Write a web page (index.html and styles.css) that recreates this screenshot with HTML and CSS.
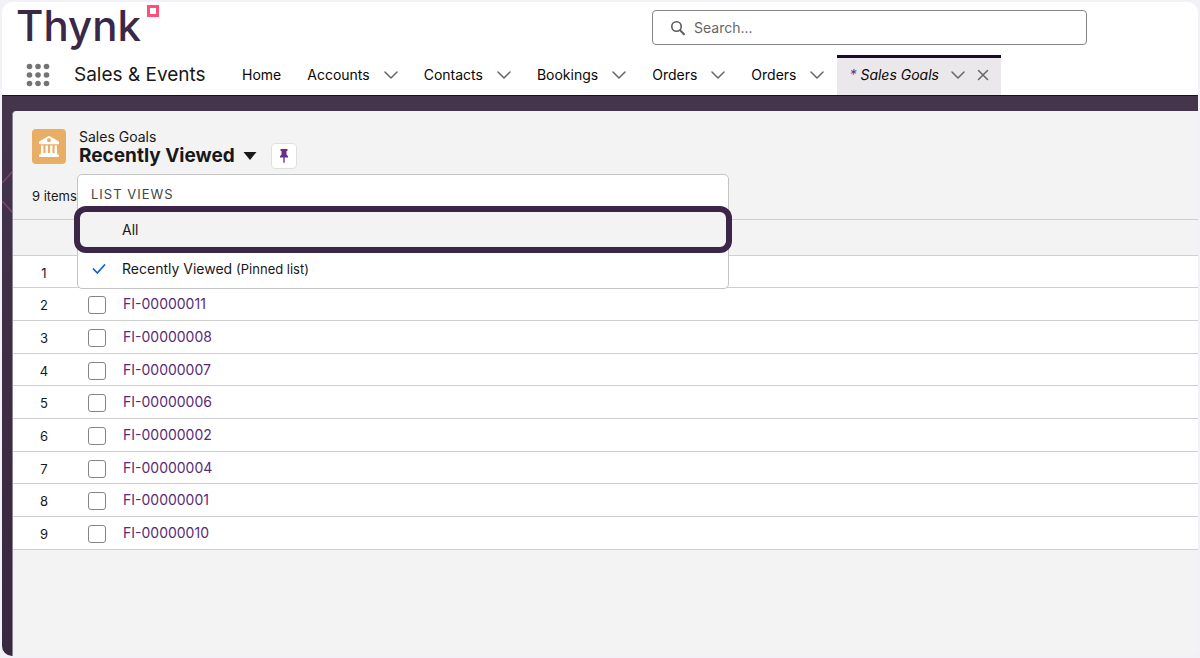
FILE: index.html
```
<!DOCTYPE html>
<html lang="en">
<head>
<meta charset="utf-8">
<meta name="viewport" content="width=device-width, initial-scale=1">
<title>Sales Goals</title>
<link rel="stylesheet" href="styles.css">
</head>
<body>
<svg class="defs" width="0" height="0" aria-hidden="true">
  <symbol id="chevron" viewBox="0 0 14 8"><path d="M1 1l6 6 6-6" fill="none" stroke="currentColor" stroke-width="1.5" stroke-linecap="round" stroke-linejoin="round"/></symbol>
</svg>
<div class="app">
  <header class="header">
    <div class="top">
      <a class="logo" href="#"><span>Thynk</span><svg width="12" height="12" viewBox="0 0 12 12" aria-hidden="true"><rect x="1.500" y="1.500" width="9" height="9" fill="#fff" stroke="#fb5078" stroke-width="3"/></svg></a>
      <label class="search">
        <svg width="16" height="16" viewBox="0 0 16 16" aria-hidden="true"><g fill="none" stroke="#5c5c5c" stroke-linecap="round"><circle cx="6.5" cy="6.5" r="4.7" stroke-width="1.6"/><path d="M10.2 10.4l3.8 3.9" stroke-width="2"/></g></svg>
        <input type="search" placeholder="Search..." aria-label="Search">
      </label>
    </div>
    <nav class="nav">
      <button class="launcher" aria-label="App launcher"><svg width="24" height="24" viewBox="0 0 24 24" fill="#747474"><circle cx="3.5" cy="3.5" r="2.8"/><circle cx="12" cy="3.5" r="2.8"/><circle cx="20.500" cy="3.500" r="2.8"/><circle cx="3.5" cy="12" r="2.8"/><circle cx="12" cy="12" r="2.8"/><circle cx="20.500" cy="12" r="2.8"/><circle cx="3.5" cy="20.500" r="2.8"/><circle cx="12" cy="20.500" r="2.8"/><circle cx="20.500" cy="20.500" r="2.8"/></svg></button>
      <span class="app-name">Sales &amp; Events</span>
      <div class="tab"><a href="#">Home</a></div>
      <div class="tab"><a href="#">Accounts</a><button aria-label="Accounts menu"><svg width="14" height="8"><use href="#chevron"/></svg></button></div>
      <div class="tab"><a href="#">Contacts</a><button aria-label="Contacts menu"><svg width="14" height="8"><use href="#chevron"/></svg></button></div>
      <div class="tab"><a href="#">Bookings</a><button aria-label="Bookings menu"><svg width="14" height="8"><use href="#chevron"/></svg></button></div>
      <div class="tab"><a href="#">Orders</a><button aria-label="Orders menu"><svg width="14" height="8"><use href="#chevron"/></svg></button></div>
      <div class="tab"><a href="#">Orders</a><button aria-label="Orders menu"><svg width="14" height="8"><use href="#chevron"/></svg></button></div>
      <div class="tab active"><a href="#"><span class="star">*</span> Sales Goals</a><button aria-label="Sales Goals menu"><svg width="14" height="8"><use href="#chevron"/></svg></button><button aria-label="Close tab"><svg width="12" height="12" viewBox="0 0 12 12"><path d="M1.500 1.500l9 9M10.500 1.500l-9 9" stroke="currentColor" stroke-width="1.500" stroke-linecap="round"/></svg></button></div>
    </nav>
  </header>
  <main class="stage">
    <svg class="pattern" width="10" height="50" viewBox="0 0 10 50" aria-hidden="true"><path d="M0 16L11 4M0 34L11 46" stroke="#804568" stroke-width="1.500"/></svg>
    <section class="panel">
      <div class="heading">
        <svg class="object-icon" width="34" height="35" viewBox="0 0 34 35" aria-hidden="true"><rect width="34" height="35" rx="4" fill="#e9ae66"/><path fill="#fff" fill-rule="evenodd" d="M16.200 7.300q.8-.5 1.600 0l8.600 5q.6.4.6 1v1q0 .9-.9.900H7.900q-.9 0-.9-.9v-1q0-.6.6-1zM17 9.300a2 2 0 1 0 0 4 2 2 0 0 0 0-4z"/><path fill="#fff" d="M9 16.500h2.400v7.600H9zM13.500 16.500h2.400v7.600h-2.400zM18.100 16.500h2.400v7.600h-2.400zM22.600 16.500H25v7.600h-2.400zM8.700 24.100h16.600v1.300H26q1 0 1 1v.7q0 .9-.9.900H7.900q-.9 0-.9-.9v-.7q0-1 1-1h.7z"/></svg>
        <div class="titles">
          <div class="object-name">Sales Goals</div>
          <div class="title-row">
            <h1>Recently Viewed</h1>
            <button class="view-toggle" aria-label="Select a list view"><svg width="14" height="8" viewBox="0 0 14 8"><path d="M.5 0h13L7 8z" fill="#181818"/></svg></button>
            <button class="pin" aria-label="Pin this list view"><svg width="10" height="16" viewBox="0 0 10 16" fill="#66308a"><path d="M1.500 1h7v1.700l-1 .3v3.500L9 8.200v1.400H5.700V14L5 15.500 4.300 14V9.600H1V8.200l1.500-1.700V3l-1-.3z"/></svg></button>
          </div>
          <div class="menu">
            <div class="menu-title">List Views</div>
            <button class="option all">All</button>
            <button class="option pinned"><svg width="14" height="12" viewBox="0 0 14 12" aria-hidden="true"><path d="M1.500 6l3.800 4L12.500 2" fill="none" stroke="#0f63df" stroke-width="1.800" stroke-linecap="round" stroke-linejoin="round"/></svg><span>Recently Viewed <small>(Pinned list)</small></span></button>
          </div>
        </div>
      </div>
      <div class="count">9 items</div>
      <table class="list">
        <thead><tr><th></th><th></th><th></th></tr></thead>
        <tbody>
          <tr><td>1</td><td><input type="checkbox" aria-label="Select item 1"></td><td></td></tr>
          <tr><td>2</td><td><input type="checkbox" aria-label="Select item 2"></td><td><a href="#">FI-00000011</a></td></tr>
          <tr><td>3</td><td><input type="checkbox" aria-label="Select item 3"></td><td><a href="#">FI-00000008</a></td></tr>
          <tr><td>4</td><td><input type="checkbox" aria-label="Select item 4"></td><td><a href="#">FI-00000007</a></td></tr>
          <tr><td>5</td><td><input type="checkbox" aria-label="Select item 5"></td><td><a href="#">FI-00000006</a></td></tr>
          <tr><td>6</td><td><input type="checkbox" aria-label="Select item 6"></td><td><a href="#">FI-00000002</a></td></tr>
          <tr><td>7</td><td><input type="checkbox" aria-label="Select item 7"></td><td><a href="#">FI-00000004</a></td></tr>
          <tr><td>8</td><td><input type="checkbox" aria-label="Select item 8"></td><td><a href="#">FI-00000001</a></td></tr>
          <tr><td>9</td><td><input type="checkbox" aria-label="Select item 9"></td><td><a href="#">FI-00000010</a></td></tr>
        </tbody>
      </table>
    </section>
  </main>
</div>
</body>
</html>
```
FILE: styles.css
```
* { box-sizing: border-box; }
body {
  margin: 0;
  padding: 2px;
  min-height: 100vh;
  display: flex;
  background: #f2f1f8;
  color: #181818;
  font-family: Inter, "Liberation Sans", sans-serif;
  font-size: 14px;
  line-height: 20px;
}
a { color: inherit; text-decoration: none; }
button {
  margin: 0;
  padding: 0;
  border: 0;
  background: none;
  color: inherit;
  font: inherit;
  cursor: pointer;
}
svg { display: block; flex: none; }
.defs { position: absolute; }
.app {
  flex: 1;
  display: flex;
  flex-direction: column;
  border-radius: 10px;
  overflow: hidden;
  background: #fff;
}

.top {
  display: grid;
  grid-template-columns: 650fr 435fr 111fr;
  height: 53px;
}
.logo {
  display: flex;
  align-items: flex-start;
  gap: 6px;
  padding-left: 14px;
  color: #3a2849;
  font-weight: 500;
  font-size: 42px;
  line-height: 48px;
}
.logo svg { margin-top: 3px; }
.search {
  display: flex;
  align-items: center;
  gap: 8px;
  height: 35px;
  margin-top: 8px;
  padding: 0 17px;
  border: 1px solid #858585;
  border-radius: 4px;
}
.search input {
  flex: 1;
  min-width: 0;
  padding: 0;
  border: 0;
  outline: 0;
  background: none;
  font: inherit;
}
.search input::placeholder { color: #666; }

.nav {
  display: flex;
  height: 40px;
  align-items: stretch;
}
.launcher { margin-left: 24px; }
.app-name {
  width: 155px;
  margin-left: 24px;
  font-size: 19px;
  line-height: 40px;
  white-space: nowrap;
}
.tab {
  display: flex;
  align-items: center;
  gap: 14px;
  padding: 0 13px;
  color: #080707;
}
.tab button { color: #666; }
.active {
  gap: 12px;
  padding: 0 12px;
  box-shadow: inset 0 3px #1c0c29;
  background: #ebe8ec;
  font-style: italic;
}
.star { color: #66308a; }

.stage {
  flex: 1;
  display: flex;
  position: relative;
  padding: 15px 0 0 10px;
  border-top: 1px solid #1c0c29;
  background:
    linear-gradient(#44344c, #44344c) top / 100% 20px no-repeat,
    linear-gradient(#44344c, #36283f) left / 20px 100% no-repeat,
    #f3f3f3;
}
.pattern { position: absolute; left: 0; top: 71px; }
.panel {
  flex: 1;
  border-left: 1px solid #8b8391;
  border-top-left-radius: 4px;
  background: #f3f3f3;
}
.heading {
  display: flex;
  gap: 13px;
  padding: 18px 19px 0;
}
.titles { position: relative; }
.object-name { line-height: 16px; }
.title-row {
  display: flex;
  align-items: center;
  height: 22px;
}
h1 {
  margin: 0;
  font-size: 19px;
  line-height: 22px;
  font-weight: 700;
}
.view-toggle { margin-left: 8px; }
.pin {
  display: grid;
  place-items: center;
  width: 26px;
  height: 26px;
  margin-left: 14px;
  border: 1px solid #e0e0e0;
  border-radius: 4px;
  background: #fff;
}
.menu {
  position: absolute;
  z-index: 1;
  left: -2px;
  top: 45px;
  width: 652px;
  padding: 9px 0;
  border: 1px solid #c4c4c4;
  border-radius: 5px;
  background: #fff;
}
.menu-title {
  padding-left: 13px;
  color: #444;
  font-size: 13px;
  letter-spacing: 1px;
  text-transform: uppercase;
}
.option {
  display: flex;
  align-items: center;
  gap: 16px;
  width: 100%;
  padding-left: 14px;
  color: #181818;
}
.option small { font-size: 13px; }
.all {
  width: calc(100% + 8px);
  height: 47px;
  margin: 2px -4px 6px;
  padding-left: 42px;
  border: 6px solid #3b2647;
  border-radius: 12px;
  background: #f3f3f3;
}
.count {
  padding: 19px 19px 13px;
  font-size: 13px;
}
.list {
  width: 100%;
  border-collapse: separate;
  border-spacing: 0;
  table-layout: fixed;
  background: #fff;
}
th, td { padding: 0; border-bottom: 1px solid #cfcfcf; text-align: left; }
th { height: 37px; border-top: 1px solid #cfcfcf; background: #f3f3f3; }
th:nth-child(1) { width: 75px; }
th:nth-child(2) { width: 35px; }
tbody tr { height: 33px; }
tbody tr:nth-child(3n + 1) { height: 32px; }
td:first-child { padding: 2px 13px 0 0; font-size: 13px; text-align: center; }
td a { color: #5a2a78; }
td input {
  display: block;
  appearance: none;
  width: 18px;
  height: 18px;
  margin: 2px 0 0;
  border: 1px solid #858585;
  border-radius: 3px;
  background: #fff;
}
```
